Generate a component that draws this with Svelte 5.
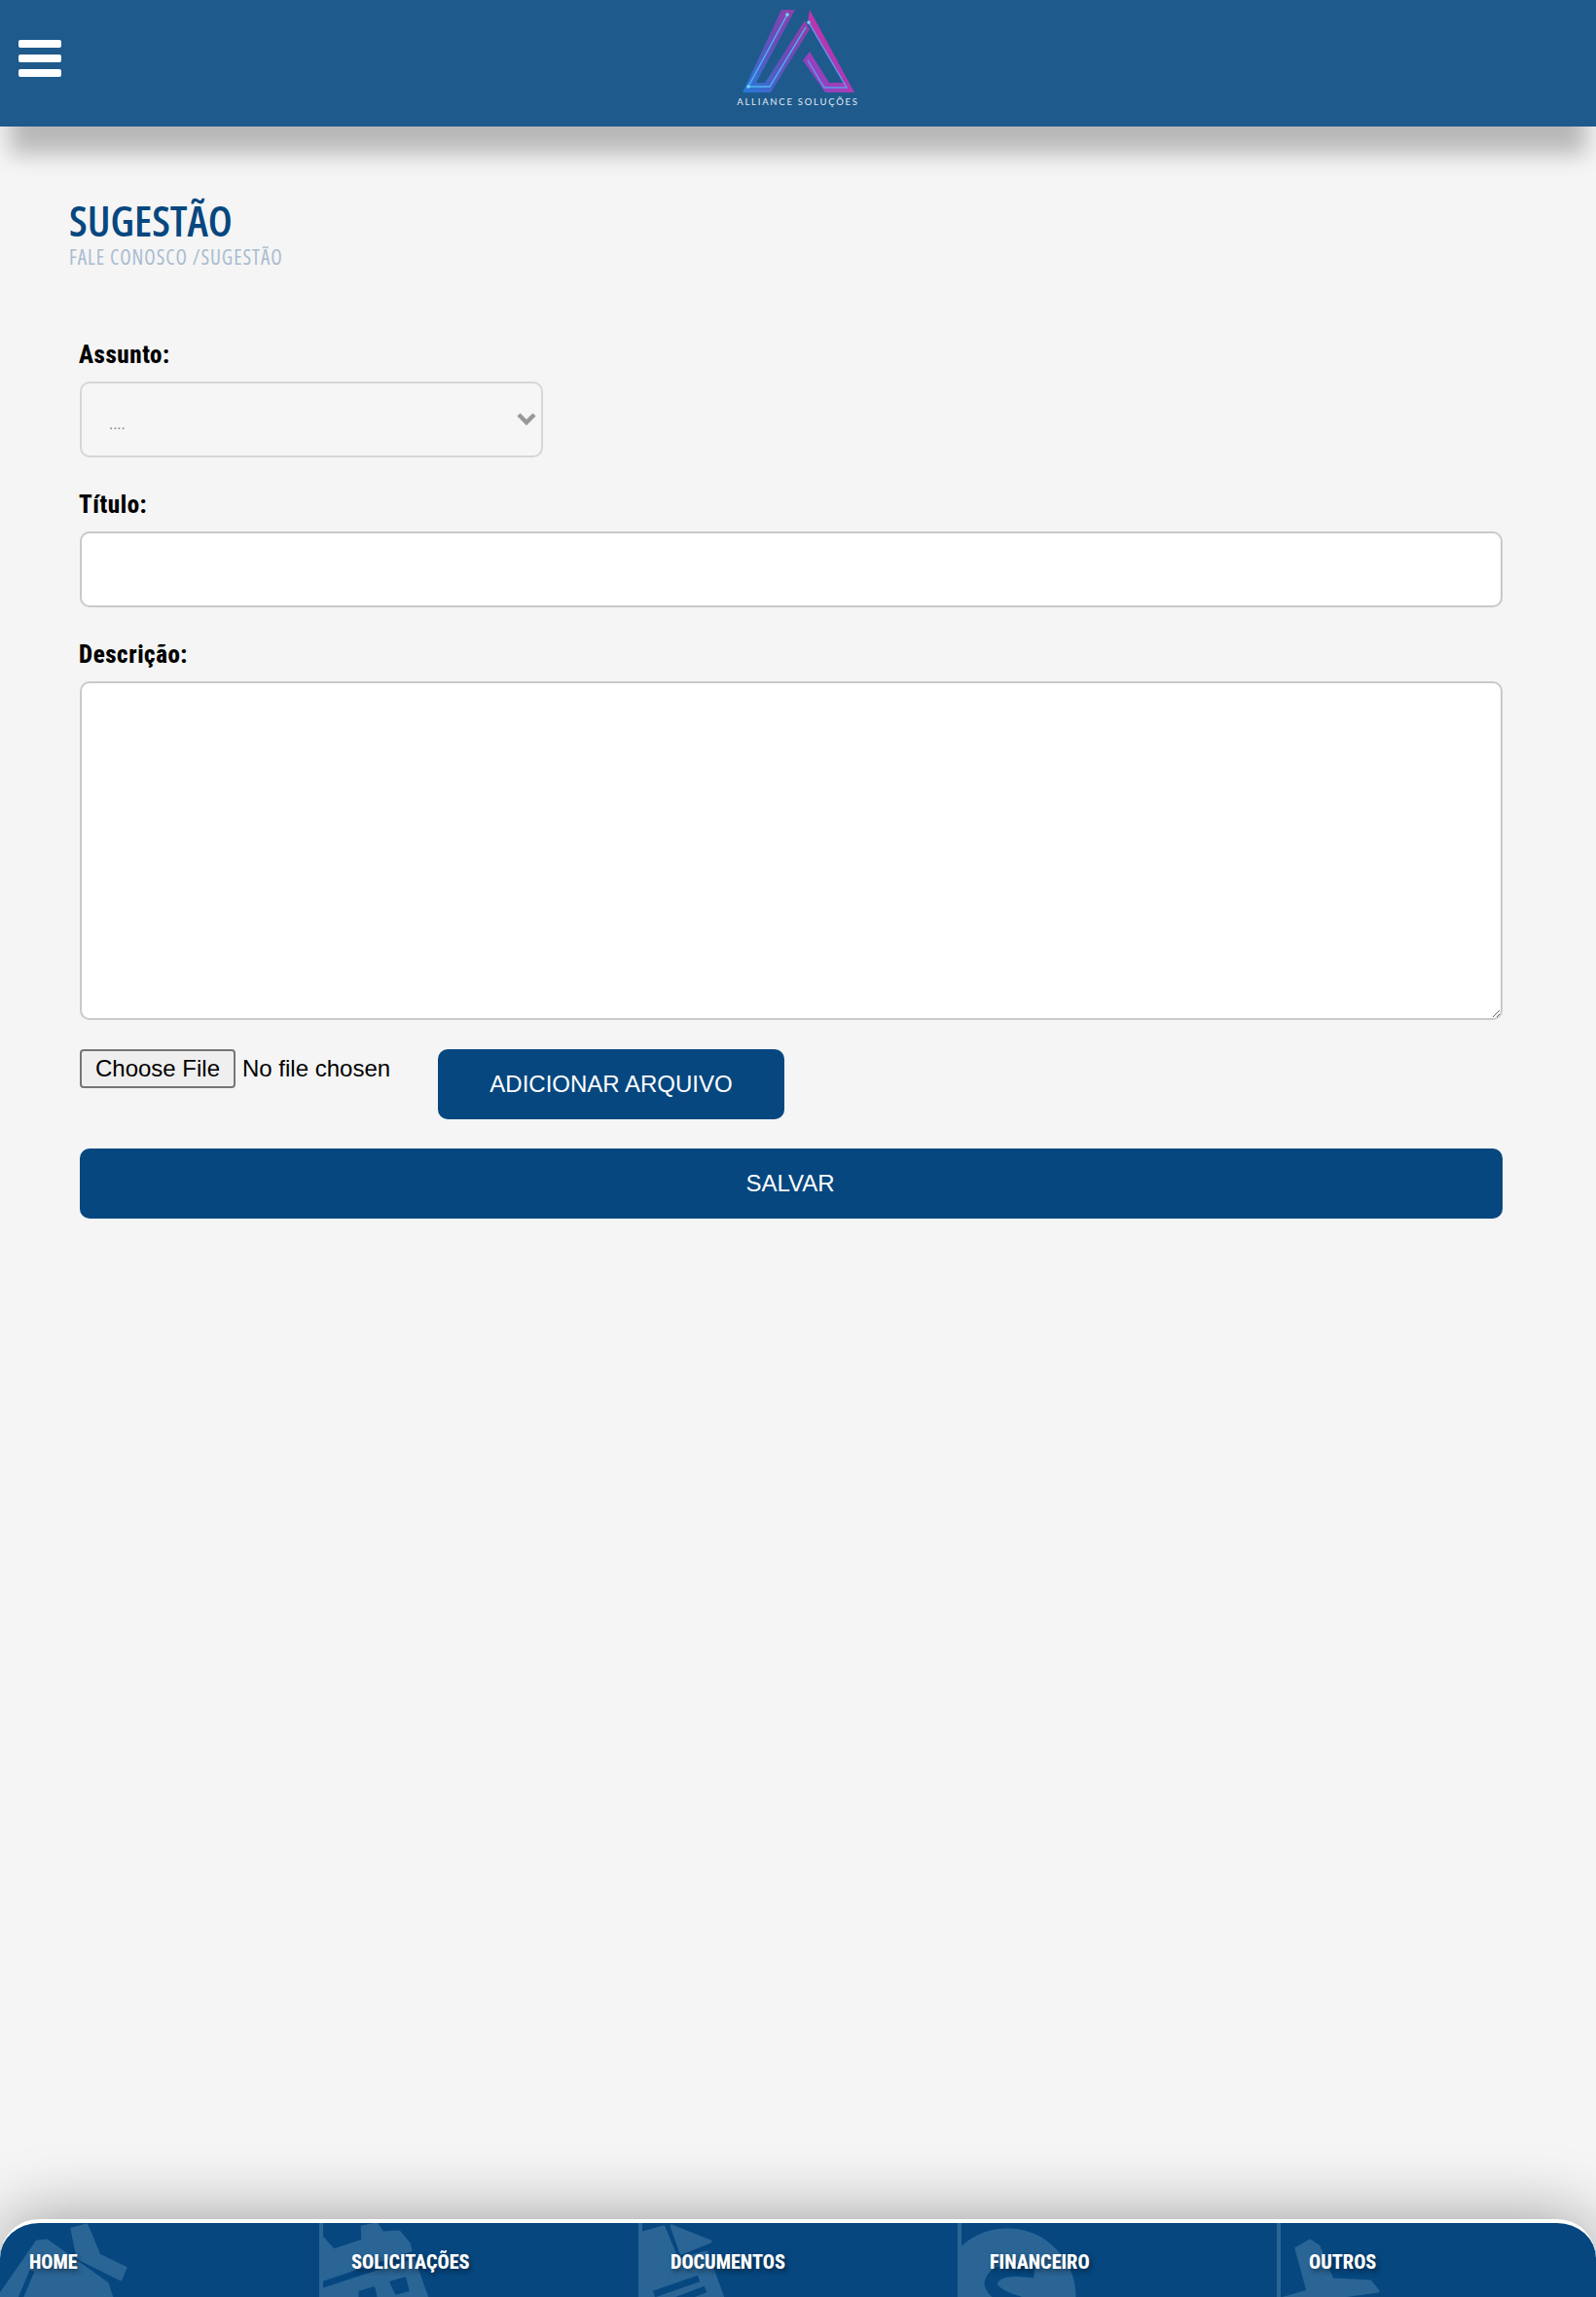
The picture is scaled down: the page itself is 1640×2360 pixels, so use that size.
<script>
  const tabs = [
    { label: "HOME", icon: "home" },
    { label: "SOLICITAÇÕES", icon: "build" },
    { label: "DOCUMENTOS", icon: "doc" },
    { label: "FINANCEIRO", icon: "money" },
    { label: "OUTROS", icon: "other" }
  ];
</script>

<div class="page">
  <header class="top">
    <button class="burger" aria-label="Menu">
      <span></span><span></span><span></span>
    </button>
    <svg class="logo" width="200" height="130" viewBox="0 0 200 130" fill="none">
      <defs>
        <linearGradient id="lg" gradientUnits="userSpaceOnUse" x1="40" y1="95" x2="130" y2="30">
          <stop offset="0" stop-color="#1f86ee" />
          <stop offset="0.55" stop-color="#7f48c4" />
          <stop offset="1" stop-color="#c233ac" />
        </linearGradient>
      </defs>
      <path d="M83 10H97L57 85H66L107 21L112 30L72 95H43Z" fill="url(#lg)" fill-opacity=".8" />
      <path d="M112 10L158 95H128L105 62L112 53L132 85H147L110 23Z" fill="url(#lg)" />
      <path d="M89 15L49 89H71L108 28" stroke="#4db6f2" stroke-width="1.4" />
      <path d="M111 23L150 90H127L110 62" stroke="#5b9df0" stroke-width="1.4" />
      <circle cx="89" cy="15" r="1.8" fill="#6fd8f5" />
      <circle cx="111" cy="23" r="1.8" fill="#6fd8f5" />
      <circle cx="49" cy="89" r="1.8" fill="#6fd8f5" />
      <text x="100" y="108" text-anchor="middle" class="logo-text">ALLIANCE SOLUÇÕES</text>
    </svg>
  </header>

  <main class="content">
    <div class="heading">
      <h1>SUGESTÃO</h1>
      <p>FALE CONOSCO /SUGESTÃO</p>
    </div>

    <form class="form">
      <label class="lbl" for="assunto">Assunto:</label>
      <div class="select-wrap">
        <select id="assunto"><option>....</option></select>
        <svg class="chev" width="20" height="14" viewBox="0 0 20 14"><path d="M2 3L10 11L18 3" fill="none" stroke="#999" stroke-width="4.5" /></svg>
      </div>

      <label class="lbl" for="titulo">Título:</label>
      <input id="titulo" class="field" type="text" />

      <label class="lbl" for="descricao">Descrição:</label>
      <textarea id="descricao" class="field area"></textarea>

      <div class="file-row">
        <input class="file" type="file" />
        <button type="button" class="btn add">ADICIONAR ARQUIVO</button>
      </div>
      <button type="button" class="btn save">SALVAR</button>
    </form>
  </main>

  <nav class="tabs">
    {#each tabs as t}
      <a class="tab" href="#top">
        <svg class="bg" width="140" height="76" viewBox="0 0 140 76">
          <g fill="#2a6596" stroke="#2a6596" stroke-width="3" stroke-linejoin="round">
            {#if t.icon === "home"}
              <path d="M74 6L89 2L102 33L129 46L124 58L80 36Z" />
              <path d="M38 19L48 18L110 62L116 80H0V74Z" />
              <path d="M33 49L20 80" fill="none" stroke="#06477f" stroke-width="5" />
            {:else if t.icon === "build"}
              <path d="M0 16L11 28L41 18L40 4L55 1L61 10L78 9L88 21L90 28L0 58Z" />
              <path d="M0 68L93 38L108 80H0Z" />
              <path d="M70 61L84 57L87 69L75 72Z" fill="#06477f" stroke="#06477f" />
              <path d="M38 71L52 67L55 80H38Z" fill="#06477f" stroke="#06477f" />
            {:else if t.icon === "doc"}
              <path d="M30 3L70 19L40 31Z" />
              <path d="M0 10L22 4L36 38L66 30L84 80H0Z" />
              <path d="M12 73L58 57M23 84L65 68" fill="none" stroke="#06477f" stroke-width="7" />
            {:else if t.icon === "money"}
              <circle cx="47" cy="76" r="69" />
              <path d="M75 50Q34 44 30 62Q32 76 68 84" fill="none" stroke="#06477f" stroke-width="13" />
            {:else}
              <path d="M16 26L30 18L39 24L53 58L92 60L100 70L0 84V78L28 70Z" />
            {/if}
          </g>
        </svg>
        <span>{t.label}</span>
      </a>
    {/each}
  </nav>
</div>

<style>
  :global(body) {
    margin: 0;
    background: #f5f5f5;
  }

  .page {
    height: 2360px;
    display: flex;
    flex-direction: column;
    overflow: hidden;
    font-family: "Liberation Sans", Arial, sans-serif;
  }

  .top {
    height: 130px;
    flex: none;
    background: #1e5a8c;
    position: relative;
    display: flex;
    justify-content: center;
    box-shadow: 0 38px 22px -10px rgba(0, 0, 0, 0.25);
  }

  .burger {
    position: absolute;
    left: 19px;
    top: 41px;
    width: 44px;
    display: flex;
    flex-direction: column;
    gap: 7px;
    padding: 0;
    border: 0;
    background: none;
  }

  .burger span {
    height: 8px;
    background: #fff;
    border-radius: 2px;
  }

  .logo-text {
    font-family: "Lato", sans-serif;
    font-size: 9.5px;
    letter-spacing: 1.75px;
    fill: #e2ebf4;
  }

  .content {
    flex: 1;
    padding: 76px 96px 0 71px;
  }

  .heading h1 {
    margin: 0;
    font-family: "Open Sans", sans-serif;
    font-stretch: 75%;
    font-size: 44px;
    line-height: 40px;
    font-weight: 600;
    color: #06477f;
  }

  .heading p {
    margin: 8px 0 0;
    font-family: "Open Sans", sans-serif;
    font-stretch: 75%;
    font-weight: 500;
    font-size: 21px;
    letter-spacing: 0.95px;
    line-height: 20px;
    color: #a9bcd0;
  }

  .form {
    margin: 76px 0 0 11px;
    display: flex;
    flex-direction: column;
    align-items: flex-start;
  }

  .lbl {
    font-family: "Roboto", sans-serif;
    font-stretch: 75%;
    font-weight: 800;
    font-size: 25px;
    letter-spacing: 0.55px;
    line-height: 30px;
    color: #000;
    margin: 0 0 12px -1px;
  }

  .select-wrap {
    position: relative;
    width: 476px;
    height: 78px;
    margin-bottom: 34px;
  }

  select {
    appearance: none;
    width: 100%;
    height: 100%;
    box-sizing: border-box;
    border: 2px solid #d6d6d6;
    border-radius: 10px;
    background: #f6f6f6;
    color: #777;
    font-size: 15px;
    padding: 8px 28px 0;
    font-family: "Liberation Sans", sans-serif;
  }

  .chev {
    position: absolute;
    right: 7px;
    top: 31px;
  }

  .field {
    width: 100%;
    height: 78px;
    box-sizing: border-box;
    border: 2px solid #c9c9c9;
    border-radius: 10px;
    background: #fff;
    margin: 0 0 34px;
    display: block;
    outline: 0;
  }

  .area {
    height: 348px;
    margin-bottom: 30px;
  }

  .file-row {
    display: flex;
    align-items: flex-start;
    margin-bottom: 30px;
  }

  .file {
    width: 368px;
    font-size: 24px;
    font-family: "Liberation Sans", sans-serif;
    color: #000;
  }

  .file::file-selector-button {
    height: 40px;
    width: 160px;
    margin-right: 7px;
    font: inherit;
    color: #000;
    background: #efefef;
    border: 2px solid #767676;
    border-radius: 4px;
  }

  .btn {
    border: 0;
    border-radius: 10px;
    background: #06477f;
    color: #fff;
    height: 72px;
    font-family: "Liberation Sans", sans-serif;
    font-size: 24px;
  }

  .add {
    width: 356px;
  }

  .save {
    width: 100%;
    padding-right: 8px;
  }

  .tabs {
    flex: none;
    height: 76px;
    display: flex;
    background: #06477f;
    border-top: 4px solid #fff;
    border-radius: 40px 40px 0 0;
    overflow: hidden;
    box-shadow: 0 0 70px rgba(0, 0, 0, 0.38);
    position: relative;
  }

  .tab {
    flex: 0 0 20%;
    box-sizing: border-box;
    position: relative;
    overflow: hidden;
    border-left: 4px solid #2a6596;
    color: #fff;
    text-decoration: none;
    font-family: "Roboto", sans-serif;
    font-stretch: 75%;
    font-weight: 800;
    font-size: 20.2px;
    line-height: 24px;
    padding: 28px 0 0 29px;
    text-shadow: 2px 3px 5px rgba(0, 0, 0, 0.45);
  }

  .tab:first-child {
    border-left: 0;
    padding-left: 30px;
  }

  .tab span {
    position: relative;
  }

  .bg {
    position: absolute;
    left: 0;
    top: 0;
  }
</style>
